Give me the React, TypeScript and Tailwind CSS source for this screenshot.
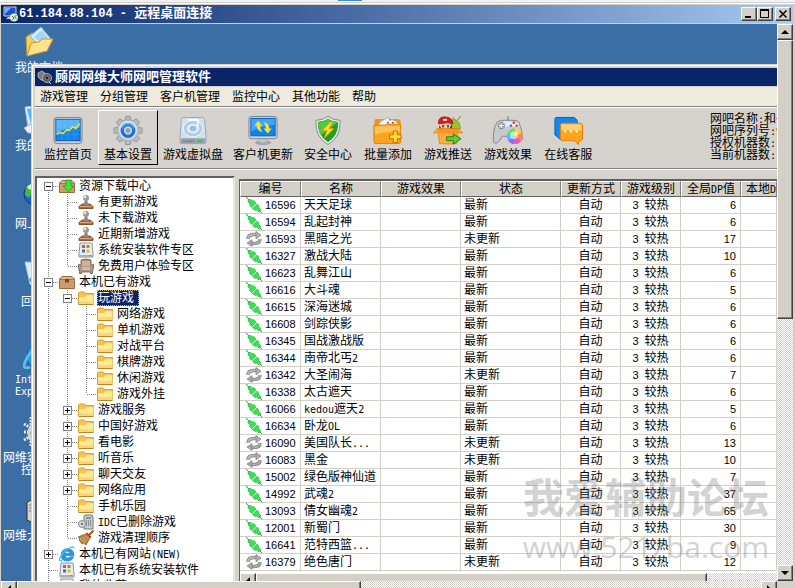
import React from "react";

const CJK = "font-['Liberation_Sans','Noto_Sans_CJK_SC',sans-serif]";
const DITHER = "bg-[conic-gradient(#fff_25%,#d4d0c8_0_50%,#fff_0_75%,#d4d0c8_0)] bg-[size:2px_2px]";
const RAISED =
  "border border-t-white border-l-white border-r-[#404040] border-b-[#404040] bg-[#d4d0c8] shadow-[inset_-1px_-1px_0_#808080]";

/* Latin runs are set half as wide as a Chinese character. */
function Mixed({ text }: { text: string }) {
  return (
    <>
      {text.split(/([\x20-\x7e]+)/).map((part, i) =>
        i % 2 ? (
          <span key={i} className="font-['DejaVu_Sans_Mono',monospace] text-[10px] leading-none">{part}</span>
        ) : (
          part
        )
      )}
    </>
  );
}

/* ---------- toolbar drawings ---------- */

function MonitorChart() {
  return (
    <svg width="32" height="32" viewBox="0 0 32 32">
      <rect x="1.5" y="2.5" width="29" height="27" rx="3" fill="#c9ced3" stroke="#7d858c" />
      <rect x="3.5" y="4.5" width="25" height="22" fill="#1585ee" stroke="#0a55b0" />
      <path d="M4 5h24v8Q14 13 4 19z" fill="#5bb8ff" />
      <path d="M4 15h24M4 20h24M10 5v21M16 5v21M22 5v21" stroke="#3d9df5" strokeWidth=".5" />
      <path d="M4 20l4-2 3 1 4-4 2 1 4-4 3 2 4-5" fill="none" stroke="#ffe21a" strokeWidth="1.5" />
    </svg>
  );
}

function Gear() {
  const teeth = [0, 45, 90, 135, 180, 225, 270, 315];
  return (
    <svg width="32" height="32" viewBox="0 0 32 32">
      {teeth.map((a) => (
        <path key={a} d="M12.500 7L13.500 1.500h5L19.500 7z" fill="#b9bcc0" stroke="#85898e" strokeWidth=".8" transform={`rotate(${a} 16 16)`} />
      ))}
      <circle cx="16" cy="16" r="11" fill="#c9ccd0" stroke="#9a9ea3" strokeWidth=".7" />
      <circle cx="16" cy="15.500" r="9" fill="#e2e4e6" />
      <circle cx="16" cy="16" r="6" fill="#cfd3d8" stroke="#1674dc" strokeWidth="3.400" />
      <path d="M10 14a6.200 6.200 0 0 1 12 0" fill="none" stroke="#54a8fb" strokeWidth="1.500" />
      <circle cx="16" cy="16" r="2" fill="#9aa0a6" stroke="#7b8188" strokeWidth=".7" />
    </svg>
  );
}

function DiskDrive() {
  return (
    <svg width="32" height="32" viewBox="0 0 32 32">
      <path d="M6 2.500h20q2 0 2 2l1.500 19v4q0 2-2 2h-23q-2 0-2-2v-4L4 4.500q0-2 2-2z" fill="#d3dfec" stroke="#9aaabc" />
      <path d="M3 24h26v4q0 1.500-2 1.500H5q-2 0-2-1.500z" fill="#9aa3ac" />
      <ellipse cx="16" cy="14" rx="10" ry="8.500" fill="#b3cce6" stroke="#f5f8fb" />
      <ellipse cx="16" cy="14" rx="6.500" ry="5" fill="#e4edf6" />
      <ellipse cx="16" cy="14" rx="3" ry="2.300" fill="#9cc0e4" stroke="#7fa4ca" strokeWidth=".6" />
      <path d="M10 5h11v6" fill="none" stroke="#fff" strokeWidth="1.500" />
      <path d="M6 27h12" stroke="#6d7780" strokeDasharray="1 1" strokeWidth="2" />
      <rect x="21" y="26" width="4" height="2" fill="#2bce2b" />
    </svg>
  );
}

function MonitorUpdate() {
  return (
    <svg width="32" height="32" viewBox="0 0 32 32">
      <ellipse cx="16" cy="28.500" rx="8" ry="2" fill="#a6abb0" stroke="#8c9196" strokeWidth=".6" />
      <rect x="13" y="24" width="6" height="4" fill="#c7cacc" />
      <rect x="1.500" y="1.500" width="29" height="23" rx="2.500" fill="#d4d8dc" stroke="#798188" />
      <rect x="3.500" y="3.500" width="25" height="18" fill="#0f83ef" stroke="#0b5bb5" />
      <path d="M4 4h24v6Q14 11 4 17z" fill="#41a6fa" />
      <path d="M11 6l4.500 5H13q0 4 2.500 6.500-6-1-6-6.500H7z" fill="#ffe01c" />
      <path d="M21 19l-4.500-5H19q0-4-2.500-6.500 6 1 6 6.500H25z" fill="#ffe01c" />
    </svg>
  );
}

function Shield() {
  return (
    <svg width="32" height="32" viewBox="0 0 32 32">
      <path d="M16 1.500q6 4 12.500 4Q29.500 23 16 30.500 2.500 23 3.500 5.500 10 5.500 16 1.500z" fill="#e9edef" stroke="#7d878c" />
      <path d="M16 4.500q5 3 10 3Q26.500 21 16 27.500 5.500 21 6 7.500q5 0 10-3z" fill="#1fa01f" stroke="#12750f" strokeWidth=".7" />
      <path d="M16 4.500q-5 3-10 3Q5.500 16 9 21l17-13.500q-5 0-10-3z" fill="#52c83d" />
      <path d="M19 7l-9 9h5l-3 8 10-10h-5l4-7z" fill="#ffe01e" stroke="#e69a00" strokeWidth=".7" />
    </svg>
  );
}

function FolderAdd() {
  return (
    <svg width="32" height="32" viewBox="0 0 32 32">
      <path d="M2 6q0-2 2-2h22q3 0 3 3v6H2z" fill="#f0951a" />
      <path d="M6 11q1-5 6-6 4-4 8 0 6 1 7 6z" fill="#f4f4f4" stroke="#a5a5a5" strokeWidth=".7" />
      <circle cx="18" cy="5" r="1" fill="#23a023" /><circle cx="21" cy="8" r="1" fill="#d22" /><circle cx="16" cy="8" r="1" fill="#26c" />
      <path d="M1.500 10.500h11l2-1h14.500v18q0 2-2 2H3.500q-2 0-2-2z" fill="#ffa21c" stroke="#e57f00" />
      <path d="M2.500 11.500h26v6q-13-2-26 3z" fill="#ffc45a" />
      <path d="M21.500 16.500h4v4h4v4h-4v4h-4v-4h-4v-4h4z" fill="#ffe13a" stroke="#c66b00" />
    </svg>
  );
}

function GamePush() {
  return (
    <svg width="32" height="32" viewBox="0 0 32 32">
      <path d="M18 6q9-5 11 8H18z" fill="#9ac42f" stroke="#678c13" strokeWidth=".7" />
      <path d="M26 5l3-4M22 4l-1-2" stroke="#678c13" />
      <circle cx="13" cy="11" r="6" fill="#ffc793" />
      <path d="M6 9q0-8 8-7 7 1 7 7l-5-1z" fill="#d51f1f" stroke="#8c0d0d" strokeWidth=".7" />
      <path d="M11 4h4v2h-4z" fill="#fff" />
      <path d="M10 10h2v3h-2zM15 10h2v3h-2z" fill="#2456b8" />
      <path d="M7 10v6h3zM20 9v6h-3z" fill="#5a2d0c" />
      <path d="M5 14L1 18.500h5l1 11q11 1 18 0l1-11h5L27 14z" fill="#ffab3d" stroke="#d97800" strokeWidth=".7" />
      <path d="M5 14.500h22l-1 4.500H6z" fill="#f7922a" />
      <path d="M14.500 22.500h7v-3l8 5-8 5.500v-3.500h-7z" fill="#5bd22c" stroke="#1f7d0d" />
    </svg>
  );
}

function GamePad() {
  return (
    <svg width="32" height="32" viewBox="0 0 32 32">
      <path d="M16 1v5" stroke="#a3a7ab" strokeWidth="2" />
      <path d="M5 7q3-2 11-1.500Q24 5 27 7q4 8 4 18-4 4-9-3H10q-5 10-9 6Q0 14 5 7z" fill="#c6cace" stroke="#82878c" />
      <path d="M5.500 8q10-3 21 0l1 5Q15 10 4 14z" fill="#e9ebed" />
      <circle cx="9" cy="11" r="4" fill="#b1b5b9" />
      <path d="M9 7.500v7M5.500 11h7" stroke="#7d8287" strokeWidth="2.500" /><path d="M9 8.500v5M6.500 11h5" stroke="#fff" strokeWidth="1.300" />
      <circle cx="22" cy="8" r="1.300" fill="#e33" /><circle cx="19" cy="11" r="1.300" fill="#27d" /><circle cx="25" cy="11" r="1.300" fill="#d42" />
      <path d="M23 22V14a8 8 0 0 1 7 4z" fill="#ffd43b" />
      <path d="M23 22l7-4a8 8 0 0 1 0 8z" fill="#ff8b49" />
      <path d="M23 22l7 4a8 8 0 0 1-7 4z" fill="#f257ae" />
      <path d="M23 22v8a8 8 0 0 1-7-4z" fill="#9b68f2" />
      <path d="M23 22l-7 4a8 8 0 0 1 0-8z" fill="#43bff5" />
      <path d="M23 22l-7-4a8 8 0 0 1 7-4z" fill="#69dd50" />
      <circle cx="22" cy="21" r="4" fill="#fff" opacity=".55" />
    </svg>
  );
}

function ChatBubbles() {
  return (
    <svg width="32" height="32" viewBox="0 0 32 32">
      <path d="M3.500 2.500h19l3 3v15l-14 1-3 4-6-5V4z" fill="#1486f4" stroke="#0a5fbf" />
      <path d="M9.500 8.500h20l1.500 1.500v15l-2 1.500h-1.500l-1 4-3.500-4H9.500l-1.500-1.500V10z" fill="#ffa41b" stroke="#e47d00" />
      <path d="M9 9.500h21V16H9z" fill="#ffd075" />
      <path d="M12 16h2v2h-2zM18 16h2v2h-2zM24 16h2v2h-2z" fill="#fff" />
    </svg>
  );
}

/* ---------- small tree and list drawings ---------- */

function Folder() {
  return (
    <svg width="16" height="16" viewBox="0 0 16 16">
      <path d="M.5 3l1-1h5l1 1.500h8v10.500H.5z" fill="#f4c34f" stroke="#d9a032" />
      <path d="M1 7h6l2-2h6.500v9H1z" fill="#ffe995" />
      <path d="M1 11h14v3H1z" fill="#fbd97a" />
      <path d="M.5 14.500h15" stroke="#bd851f" />
    </svg>
  );
}

function Crate({ arrow }: { arrow?: boolean }) {
  return (
    <svg width="16" height="16" viewBox="0 0 16 16">
      <path d="M3 2.500h10L15.500 5v9.500H.5V5z" fill="#cf9c6c" stroke="#9a6b42" />
      <path d="M1 5.500h14" stroke="#a9784e" />
      <path d="M3 3h10l1 2H2z" fill="#e3b183" />
      {arrow ? (
        <path d="M7 2h5v6h3l-5.500 6L4 8h3z" fill="#49df39" stroke="#1c9a18" strokeWidth=".8" />
      ) : (
        <path d="M6 5h4v4L8 8 6 9z" fill="#7d4826" />
      )}
    </svg>
  );
}

function Joystick() {
  return (
    <svg width="16" height="16" viewBox="0 0 16 16">
      <path d="M4 10h8l3 2.500v2H1v-2z" fill="#b7683c" stroke="#74391d" strokeWidth=".8" />
      <path d="M2 12.500h12" stroke="#e3a071" />
      <path d="M7 6h2l1.500 5h-5z" fill="#888" />
      <circle cx="8" cy="4" r="3" fill="#999" />
      <circle cx="7" cy="3" r="1.300" fill="#eee" />
    </svg>
  );
}

function SoftBox() {
  return (
    <svg width="16" height="16" viewBox="0 0 16 16">
      <path d="M2 1h12l1 11v3H1v-3z" fill="#e9edf0" stroke="#8e969d" />
      <path d="M1 13h14v2H1z" fill="#a9b0b6" />
      <path d="M4 3h3v3H4z" fill="#e24a28" /><path d="M8.500 3h3v3h-3z" fill="#58b32c" />
      <path d="M4 7.500h3v3H4z" fill="#3671db" /><path d="M8.500 7.500h3v3h-3z" fill="#eeb51b" />
      <path d="M11 13.500h2" stroke="#2bd42b" />
    </svg>
  );
}

function Armchair() {
  return (
    <svg width="16" height="16" viewBox="0 0 16 16">
      <path d="M3 2q5-2 10 0v5l2.500-.5V9l-1 5v1.500h-2V14h-9v1.500h-2V14l-1-5V6.500L3 7z" fill="#b09681" stroke="#705640" strokeWidth=".8" />
      <path d="M4 3h8v5H4z" fill="#cbb3a0" /><path d="M4 9h8v3H4z" fill="#d1baa8" />
    </svg>
  );
}

function TrashPhone() {
  return (
    <svg width="16" height="16" viewBox="0 0 16 16">
      <path d="M7 1h7l1 2v12H6V3z" fill="#c9cdd0" stroke="#70767b" />
      <path d="M8 4h5M8 7h1M10 7h1M12 7h1M8 9h1M10 9h1M12 9h1M8 11h1M10 11h1M12 11h1" stroke="#4f565c" />
      <circle cx="4" cy="10" r="3.500" fill="#d8dbdd" stroke="#858b90" /><circle cx="4" cy="10" r="1.200" fill="#777" />
    </svg>
  );
}

function Broom() {
  return (
    <svg width="16" height="16" viewBox="0 0 16 16">
      <path d="M15.500.5L11 5" stroke="#a05b22" strokeWidth="2" />
      <path d="M9 3.500L12.500 7 8 15 5.500 13 4 14 1 10 2 9 0 7z" fill="#b9803c" stroke="#7d5320" strokeWidth=".7" />
      <path d="M2 8l5 5M4.500 7l4 4.500M7 5.500L10.500 9" stroke="#ecc98b" strokeWidth=".8" />
      <path d="M8.500 3l4.500 4.500" stroke="#a23b22" strokeWidth="1.400" />
    </svg>
  );
}

function Explorer({ size = 16 }: { size?: number }) {
  return (
    <svg width={size} height={size} viewBox="0 0 16 16">
      <path d="M15 9.500H6q.3 3 3 2.500 1.500-.2 2-1.300h3.700Q13 15 8.300 15 2 15 2 9q.5-6 6.500-6.500Q15 3 15 9.500zM6 7.300h4.700Q10.500 5 8.300 5.200 6.300 5.300 6 7.300z" fill="#2797e8" stroke="#1266b4" strokeWidth=".5" />
      <path d="M3.500 14.500Q-.5 16 1 12 3.500 6 9.500 2.500 15-.5 15 2.500" fill="none" stroke="#55bff5" strokeWidth="1.400" />
    </svg>
  );
}

function Plug() {
  return (
    <svg width="16" height="16" viewBox="0 0 16 16">
      <path d="M0 0l4 4M12 12l4 4" stroke="#3a9c4b" />
      <path d="M2 5V2.500h3L6.500 4 8 3.500 10 6l-4 4.500-2.500-2L4 7z" fill="#35e353" stroke="#229c37" strokeWidth=".5" />
      <path d="M6.500 11.500L11 7l2 2-.5 1.500 2 1.500v2.500H12L10.500 13 9 13.500z" fill="#35e353" stroke="#229c37" strokeWidth=".5" />
      <path d="M6 11l4.800-4.500" stroke="#d5f7da" strokeWidth=".8" />
    </svg>
  );
}

function Cycle() {
  return (
    <svg width="16" height="16" viewBox="0 0 16 16">
      <path d="M2 8q0-4.500 6-4.500h3" fill="none" stroke="#7f7f7f" strokeWidth="3.400" />
      <path d="M2 8q0-4.500 6-4.500h3" fill="none" stroke="#b9b9b9" strokeWidth="1.800" />
      <path d="M10 .5L15 4l-5 4z" fill="#b0b0b0" stroke="#7f7f7f" strokeWidth=".7" />
      <path d="M14 8q0 4.500-6 4.500H5" fill="none" stroke="#7f7f7f" strokeWidth="3.400" />
      <path d="M14 8q0 4.500-6 4.500H5" fill="none" stroke="#b0b0b0" strokeWidth="1.800" />
      <path d="M6 8.500L1 12l5 3.500z" fill="#a8a8a8" stroke="#7f7f7f" strokeWidth=".7" />
    </svg>
  );
}

/* ---------- tree ---------- */

type Mark = "through" | "blank" | "first" | "tee" | "end";

function Guide({ mark, box }: { mark: Mark; box?: "+" | "-" }) {
  const up = mark !== "blank" && mark !== "first";
  const down = mark !== "blank" && mark !== "end";
  const side = mark !== "blank" && mark !== "through";
  return (
    <svg width="19" height="16" viewBox="0 0 19 16" className="block shrink-0" shapeRendering="crispEdges">
      {up && <path d="M9.500 0V8" stroke="#808080" strokeDasharray="1 1" />}
      {down && <path d="M9.500 8V16" stroke="#808080" strokeDasharray="1 1" />}
      {side && <path d="M10 8.500H19" stroke="#808080" strokeDasharray="1 1" />}
      {box && <rect x="5.500" y="4.500" width="8" height="8" fill="#fff" stroke="#808080" />}
      {box && <path d="M7 8.500H12" stroke="#000" />}
      {box === "+" && <path d="M9.500 6V11" stroke="#000" />}
    </svg>
  );
}

type Node = { text: string; marks: Mark[]; icon: React.ReactNode; box?: "+" | "-"; on?: boolean };
const kid = (text: string, icon: React.ReactNode, box?: "+" | "-", last = false): Node => ({
  text, icon, box, marks: ["through", last ? "end" : "tee"],
});
const leaf = (text: string, last = false): Node => ({
  text, icon: <Folder />, marks: ["through", "through", last ? "end" : "tee"],
});

const tree: Node[] = [
  { text: "资源下载中心", marks: ["first"], icon: <Crate arrow />, box: "-" },
  kid("有更新游戏", <Joystick />),
  kid("未下载游戏", <Joystick />),
  kid("近期新增游戏", <Joystick />),
  kid("系统安装软件专区", <SoftBox />),
  kid("免费用户体验专区", <Armchair />, undefined, true),
  { text: "本机已有游戏", marks: ["tee"], icon: <Crate />, box: "-" },
  { ...kid("玩游戏", <Folder />, "-"), on: true },
  leaf("网络游戏"),
  leaf("单机游戏"),
  leaf("对战平台"),
  leaf("棋牌游戏"),
  leaf("休闲游戏"),
  leaf("游戏外挂", true),
  kid("游戏服务", <Folder />, "+"),
  kid("中国好游戏", <Folder />, "+"),
  kid("看电影", <Folder />, "+"),
  kid("听音乐", <Folder />, "+"),
  kid("聊天交友", <Folder />, "+"),
  kid("网络应用", <Folder />, "+"),
  kid("手机乐园", <Folder />),
  kid("IDC已删除游戏", <TrashPhone />),
  kid("游戏清理顺序", <Broom />, undefined, true),
  { text: "本机已有网站(NEW)", marks: ["tee"], icon: <Explorer />, box: "+" },
  { text: "本机已有系统安装软件", marks: ["tee"], icon: <SoftBox /> },
  { text: "我的收藏", marks: ["tee"], icon: <SoftBox /> },
];

function Tree() {
  return (
    <ul className="mt-[6px] w-[200px] shrink-0 overflow-hidden border-2 border-b-0 border-l-[#606060] border-t-[#606060] border-r-[#e8e6e1] bg-white pl-[2px]">
      {tree.map((n) => (
        <li key={n.text} className="flex h-4 items-center whitespace-nowrap">
          {n.marks.map((m, i) =>
            n.box && i === n.marks.length - 1 ? (
              <button key={i} aria-label={n.text} className="block shrink-0"><Guide mark={m} box={n.box} /></button>
            ) : (
              <Guide key={i} mark={m} />
            )
          )}
          <span className="flex w-[18px] shrink-0 justify-center">{n.icon}</span>
          <span className={n.on ? "ml-[2px] h-4 border border-dotted border-[#e0b060] bg-[#0a246a] pr-1 leading-[14px] text-white" : "ml-[3px] h-4 leading-4"}>
            <Mixed text={n.text} />
          </span>
        </li>
      ))}
    </ul>
  );
}

/* ---------- game list ---------- */

const games: [string, string, boolean, number][] = [
  ["16596", "天天足球", true, 6],
  ["16594", "乱起封神", true, 6],
  ["16593", "黑暗之光", false, 17],
  ["16327", "激战大陆", true, 10],
  ["16623", "乱舞江山", true, 6],
  ["16616", "大斗魂", true, 5],
  ["16615", "深海迷城", true, 6],
  ["16608", "剑踪侠影", true, 6],
  ["16345", "国战激战版", true, 6],
  ["16344", "南帝北丐2", true, 6],
  ["16342", "大圣闹海", false, 7],
  ["16338", "太古遮天", true, 6],
  ["16066", "kedou遮天2", true, 5],
  ["16634", "卧龙OL", true, 6],
  ["16090", "美国队长...", false, 13],
  ["16083", "黑金", false, 10],
  ["15002", "绿色版神仙道", true, 7],
  ["14992", "武魂2", true, 37],
  ["13093", "倩女幽魂2", true, 65],
  ["12001", "新蜀门", true, 30],
  ["16641", "范特西篮...", true, 9],
  ["16379", "绝色唐门", false, 12],
];

const heads = ["编号", "名称", "游戏效果", "状态", "更新方式", "游戏级别", "全局DP值", "本地DP值"];
const TD = "h-[17px] overflow-hidden whitespace-nowrap border-b border-r border-[#d4d0c8] p-0 leading-4";

function GameList() {
  return (
    <div className="ml-1 mt-[9px] flex min-w-0 flex-1 flex-col border-l border-t-2 border-[#606060]">
      <div className="min-h-0 flex-1 overflow-hidden bg-white">
        <table className="w-full table-fixed border-separate border-spacing-0">
          <colgroup>
            <col className="w-[61px]" />
            <col className="w-20" />
            <col className="w-20" />
            <col className="w-[100px]" />
            <col className="w-[60px]" />
            <col className="w-[60px]" />
            <col className="w-[60px]" />
            <col />
          </colgroup>
          <thead>
            <tr>
              {heads.map((h, i) => (
                <th
                  key={h}
                  className={
                    "h-4 overflow-hidden whitespace-nowrap border border-b-[#606060] border-l-white border-r-[#808080] border-t-white bg-[#d4d0c8] p-0 font-normal leading-[14px] " +
                    (i === 7 ? "pl-1 text-left" : "text-center")
                  }
                >
                  <Mixed text={h} />
                </th>
              ))}
            </tr>
          </thead>
          <tbody>
            {games.map(([id, name, fresh, dp]) => (
              <tr key={id}>
                <td className={TD}>
                  <span className="flex h-4 items-center gap-[3px] pl-[6px] text-[11px]">
                    {fresh ? <Plug /> : <Cycle />}
                    {id}
                  </span>
                </td>
                <td className={TD + " pl-[3px]"}><Mixed text={name} /></td>
                <td className={TD} />
                <td className={TD + " pl-[3px]"}>{fresh ? "最新" : "未更新"}</td>
                <td className={TD + " text-center"}>自动</td>
                <td className={TD + " text-center"}><span className="mr-[6px] text-[11px] leading-none">3</span>较热</td>
                <td className={TD + " pr-1 text-right text-[11px]"}>{dp}</td>
                <td className={TD} />
              </tr>
            ))}
          </tbody>
        </table>
      </div>
      <div className={"flex h-2 shrink-0 overflow-hidden " + DITHER}>
        <button aria-label="向左" className={"flex h-4 w-4 shrink-0 items-center justify-center " + RAISED}>
          <svg width="8" height="8" viewBox="0 0 8 8"><path d="M6 0v8L2 4z" /></svg>
        </button>
        <div className={"h-4 w-[451px] " + RAISED} />
      </div>
    </div>
  );
}

/* ---------- application window ---------- */

const menus = ["游戏管理", "分组管理", "客户机管理", "监控中心", "其他功能", "帮助"];
const tools: [string, React.ReactNode][] = [
  ["监控首页", <MonitorChart />],
  ["基本设置", <Gear />],
  ["游戏虚拟盘", <DiskDrive />],
  ["客户机更新", <MonitorUpdate />],
  ["安全中心", <Shield />],
  ["批量添加", <FolderAdd />],
  ["游戏推送", <GamePush />],
  ["游戏效果", <GamePad />],
  ["在线客服", <ChatBubbles />],
];

function ManagerWindow() {
  return (
    <section className="absolute bottom-0 left-[30px] right-0 top-10 flex flex-col overflow-hidden border-l border-t border-[#d4d0c8] bg-[#d6d3ce]">
      <div className="flex min-h-0 flex-1 flex-col border-l border-t border-white pl-[2px] pt-[2px]">
        <header className="flex h-[18px] shrink-0 items-center gap-[2px] bg-[#0a246a] pl-[2px] text-[13px] font-bold leading-[18px] text-white">
          <svg width="16" height="16" viewBox="0 0 16 16">
            <path d="M1 4l4-2 3 2v8l-4-1-3-3z" fill="#7c7c7c" stroke="#c4c4c4" strokeWidth=".7" />
            <circle cx="10" cy="9" r="4.500" fill="#555" stroke="#ccc" strokeWidth=".8" />
            <circle cx="10" cy="9" r="2" fill="#222" stroke="#aaa" strokeWidth=".7" />
            <path d="M12 13l2 2" stroke="#ddd" />
          </svg>
          <h1>顾网网维大师网吧管理软件</h1>
        </header>
        <nav className="flex h-5 shrink-0 items-center gap-3 border-t border-[#d4d0c8] bg-[#eeebde] pl-[5px]">
          {menus.map((m) => (
            <button key={m} className="leading-[18px]">{m}</button>
          ))}
        </nav>
        <div className="flex h-[63px] shrink-0 overflow-hidden border-b border-t border-b-[#808080] border-t-[#808080] pl-[3px] shadow-[inset_0_1px_0_#fff]">
          {tools.map(([label, icon], i) => (
            <button
              key={label}
              className={
                "mt-[3px] flex h-[55px] shrink-0 flex-col items-center border pt-1 " +
                (label.length > 4 ? "px-1 " : "px-[5px] ") +
                (i === 1 ? "border-b-black border-l-white border-r-black border-t-white" : "border-transparent")
              }
            >
              {icon}
              <span className="leading-[18px]">{label}</span>
            </button>
          ))}
          <div className="ml-auto w-[67px] shrink-0 overflow-hidden whitespace-nowrap pt-[6px] leading-3">
            <p className="h-3"><Mixed text="网吧名称:和平" /></p>
            <p className="h-3"><Mixed text="网吧序列号:9" /></p>
            <p className="h-3"><Mixed text="授权机器数:1" /></p>
            <p className="h-3"><Mixed text="当前机器数:1" /></p>
          </div>
        </div>
        <div className="flex min-h-0 flex-1 border-t border-white">
          <Tree />
          <GameList />
        </div>
      </div>
    </section>
  );
}

/* ---------- desktop ---------- */

const shortcuts: [string, React.ReactNode][] = [
  ["我的文档", (
    <svg width="32" height="32" viewBox="0 0 32 32">
      <path d="M3 11l6-4 3 2v18l-8 3z" fill="#f5cf62" stroke="#c8952c" />
      <path d="M7 10l11-9 10 12-10 9z" fill="#d5eefc" stroke="#78b4de" />
      <path d="M11 11l8-7 6 8-6 6z" fill="#a5d4f4" />
      <path d="M8 17l8-1 3-3 11 0-6 12-20 5z" fill="#ffe28b" stroke="#c8952c" />
    </svg>
  )],
  ["我的电脑", (
    <svg width="32" height="32" viewBox="0 0 32 32">
      <path d="M2 3l19-2 3 20-19 2z" fill="#dfeaf5" stroke="#a9c0d6" /><path d="M4 5l15-2 3 16-14 1z" fill="#4db3f4" />
      <path d="M1 24l6-4 19 4-3 6-18-1z" fill="#edf0f3" stroke="#a5adb5" />
    </svg>
  )],
  ["网上邻居", (
    <svg width="32" height="32" viewBox="0 0 32 32">
      <circle cx="12" cy="12" r="11" fill="#1763c8" stroke="#0c408e" /><path d="M3 5q8-6 13-2l-3 6-4 1-3 6-4-3z" fill="#48b83a" />
      <path d="M4 5q3-4 8-3l-5 6z" fill="#d1f4c5" />
    </svg>
  )],
  ["回收站", (
    <svg width="32" height="32" viewBox="0 0 32 32">
      <path d="M2 2l25 1-4 24-9 3-7-6z" fill="#dceefb" stroke="#9cc4e2" /><path d="M6 19l5-4 3 7-4 5z" fill="#4b9de2" />
    </svg>
  )],
  ["Internet Explorer", <Explorer size={32} />],
  ["网维客户机监控平台", (
    <svg width="32" height="32" viewBox="0 0 32 32">
      <path d="M8 1v30M1 8l28 16M1 24L29 8M1 16h30" stroke="#e5e5e5" strokeWidth="3" strokeDasharray="2 1" />
      <circle cx="17" cy="17" r="11" fill="#3b7e28" stroke="#d6d6d6" strokeWidth="3" />
    </svg>
  )],
  ["网维大师工具", (
    <svg width="32" height="32" viewBox="0 0 32 32">
      <path d="M4 8l9-4 13 3v19l-13 4-9-4z" fill="#d4d4ca" stroke="#333" /><path d="M6 11h6M6 14h6M6 17h6" stroke="#777" />
    </svg>
  )],
  ["网维助手", <Folder />],
];

function Desktop() {
  return (
    <main className="relative min-h-0 min-w-0 flex-1 overflow-hidden bg-[#3a6ea5]">
      <ul className="flex w-[76px] flex-col pt-[2px] text-white">
        {shortcuts.map(([label, icon]) => (
          <li key={label} className="flex h-[78px] shrink-0 flex-col items-center">
            {icon}
            <span
              className={
                "mt-1 w-[72px] text-center leading-3 " +
                (label.startsWith("Inter") ? "px-2 font-['DejaVu_Sans_Mono',monospace] text-[10px]" : "")
              }
            >
              {label}
            </span>
          </li>
        ))}
      </ul>
      <ManagerWindow />
      <div className="pointer-events-none absolute bottom-[14px] right-2 text-right text-[#707070] opacity-30">
        <p className="text-[41px] font-bold leading-[56px]">我爱辅助论坛</p>
        <p className="font-['Open_Sans',sans-serif] text-[30px] leading-10">www.521zba.com</p>
      </div>
    </main>
  );
}

function ScrollButton({ label, d }: { label: string; d: string }) {
  return (
    <button aria-label={label} className={"flex h-4 w-4 shrink-0 items-center justify-center " + RAISED}>
      <svg width="8" height="8" viewBox="0 0 8 8"><path d={d} /></svg>
    </button>
  );
}

export default function App() {
  return (
    <div className={"flex h-screen w-full flex-col overflow-hidden bg-[#d4d0c8] text-[12px] text-black " + CJK}>
      <div className="flex h-[3px] shrink-0 border-b border-[#d4d0c8] bg-[#edf3f8]">
        <div className="ml-[338px] h-px w-6 bg-[#3a8ccc]" />
      </div>
      <div className="h-[2px] shrink-0 border-t border-white" />
      <header className="ml-px mr-[2px] flex h-[18px] shrink-0 items-center bg-gradient-to-r from-[#0a246a] to-[#a6caf0] pl-[2px] text-white">
        <svg width="16" height="16" viewBox="0 0 16 16">
          <path d="M1 1h12v9H1z" fill="#1c4fc9" stroke="#c9d2e5" />
          <path d="M2 2h6L2 8z" fill="#7caaf5" />
          <path d="M5 11h5v2H3z" fill="#c4c4c4" />
          <circle cx="11" cy="11.500" r="4" fill="#e6ecdb" />
          <path d="M9 10l2 2-2 2M13.500 9l-2 2 2 2" fill="none" stroke="#2b8b2b" />
        </svg>
        <h2 className="flex-1 whitespace-pre font-['Liberation_Mono','Noto_Sans_CJK_SC',monospace] text-[12px] font-bold leading-[18px]">
          61.184.88.104 - <span className="text-[13px]">远程桌面连接</span>
        </h2>
        <div className="flex pr-[2px]">
          <button aria-label="最小化" className={"h-[14px] w-4 " + RAISED}>
            <svg width="14" height="12" viewBox="0 0 14 12" shapeRendering="crispEdges"><path d="M3 8h6v2H3z" /></svg>
          </button>
          <button aria-label="最大化" className={"h-[14px] w-4 " + RAISED}>
            <svg width="14" height="12" viewBox="0 0 14 12" shapeRendering="crispEdges"><path d="M2 1h9v9H2zM3 3v6h7V3z" fillRule="evenodd" /></svg>
          </button>
          <button aria-label="关闭" className={"ml-[2px] h-[14px] w-4 " + RAISED}>
            <svg width="14" height="12" viewBox="0 0 14 12"><path d="M3.500 2.500l7 7M10.500 2.500l-7 7" stroke="#000" strokeWidth="1.600" /></svg>
          </button>
        </div>
      </header>
      <div className="ml-px mr-[2px] mt-px flex min-h-0 flex-1">
        <Desktop />
        <div className={"flex w-4 shrink-0 flex-col " + DITHER}>
          <ScrollButton label="向上" d="M0 6h8L4 2z" />
          <div className={"h-[279px] shrink-0 " + RAISED} />
          <div className="flex-1" />
          <ScrollButton label="向下" d="M0 2h8L4 6z" />
        </div>
      </div>
      <div className="ml-px mr-[2px] flex h-[7px] shrink-0 overflow-hidden">
        <div className={"flex flex-1 " + DITHER}>
          <ScrollButton label="向左" d="M6 0v8L2 4z" />
          <div className={"h-4 w-[344px] " + RAISED} />
          <div className="flex-1" />
          <ScrollButton label="向右" d="M2 0v8l4-4z" />
        </div>
        <div className="w-4 bg-[#d4d0c8]" />
      </div>
    </div>
  );
}
